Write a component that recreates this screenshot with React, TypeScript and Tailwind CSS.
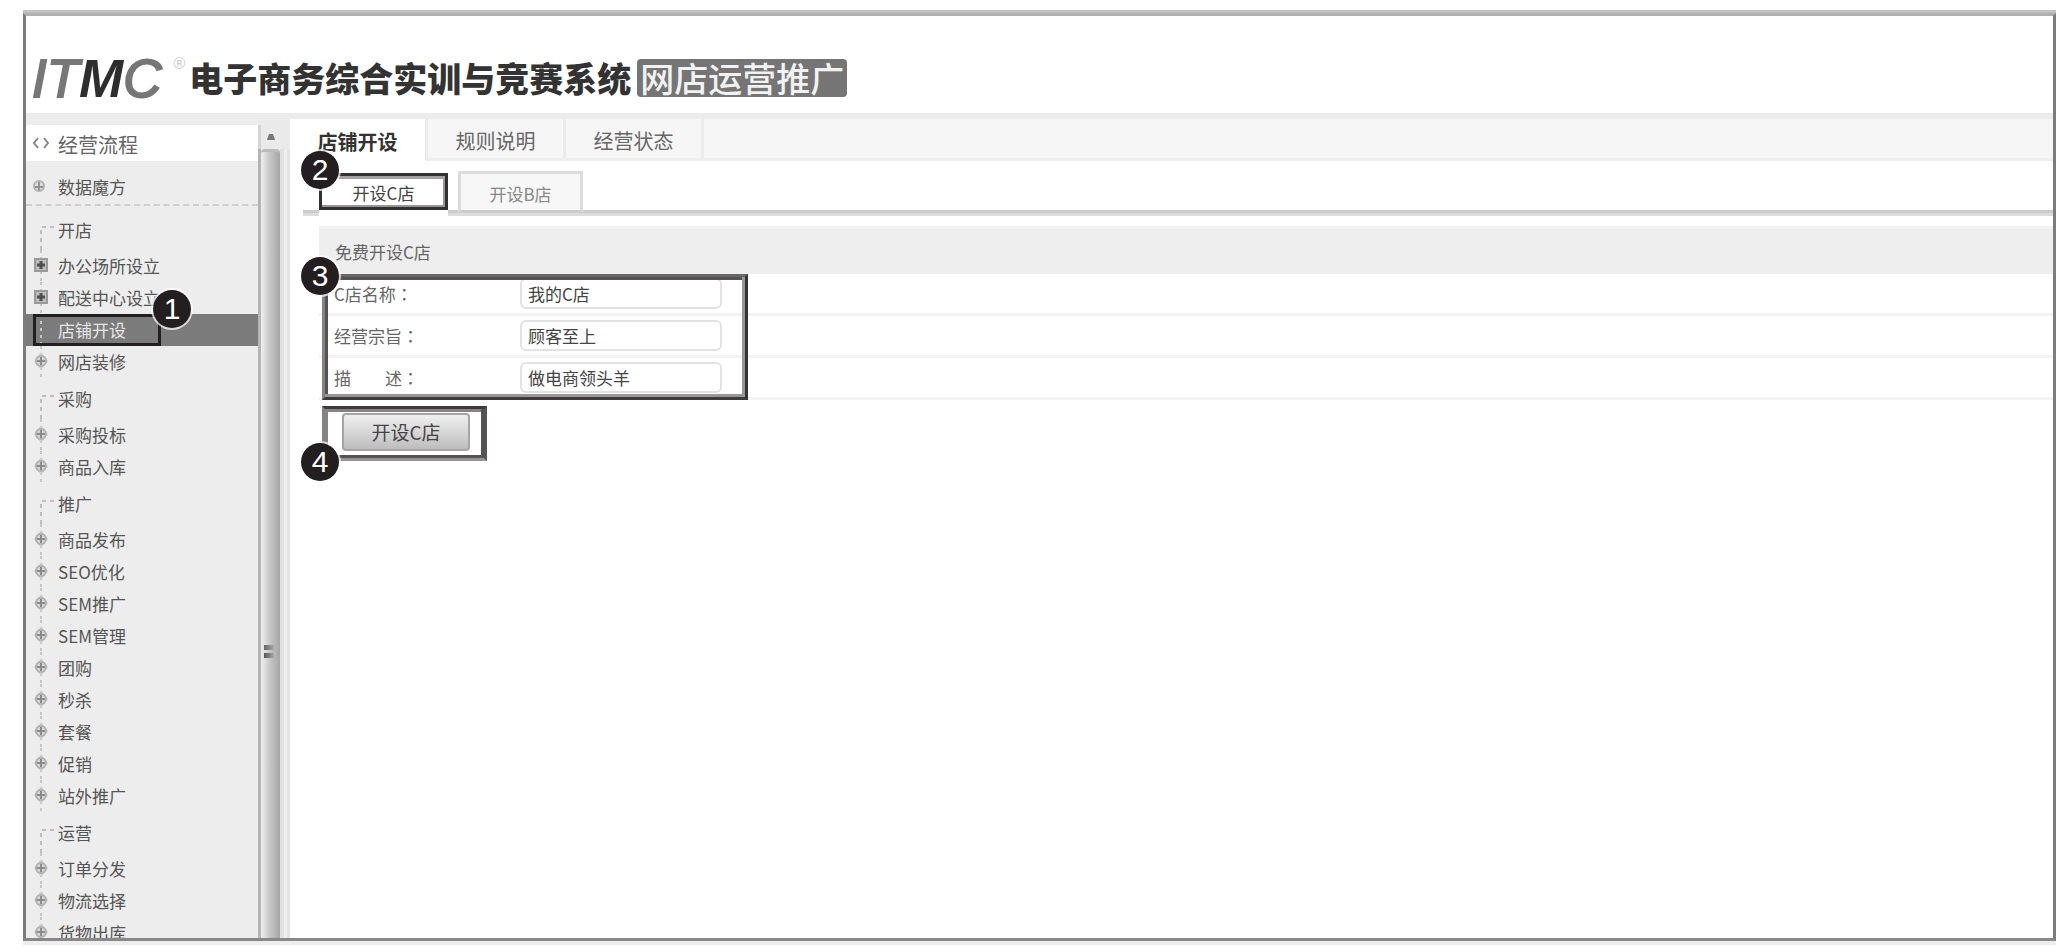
import { useState } from 'react';
import clsx from 'clsx';

type NodeKind = 'dot' | 'box' | 'none';

interface MenuItem {
  label: string;
  kind?: NodeKind;
}

const MENU: { title: string; items: MenuItem[] }[] = [
  {
    title: '开店',
    items: [
      { label: '办公场所设立', kind: 'box' },
      { label: '配送中心设立', kind: 'box' },
      { label: '店铺开设', kind: 'none' },
      { label: '网店装修' },
    ],
  },
  { title: '采购', items: [{ label: '采购投标' }, { label: '商品入库' }] },
  {
    title: '推广',
    items: [
      { label: '商品发布' },
      { label: 'SEO优化' },
      { label: 'SEM推广' },
      { label: 'SEM管理' },
      { label: '团购' },
      { label: '秒杀' },
      { label: '套餐' },
      { label: '促销' },
      { label: '站外推广' },
    ],
  },
  {
    title: '运营',
    items: [{ label: '订单分发' }, { label: '物流选择' }, { label: '货物出库' }],
  },
];

const TABS = ['店铺开设', '规则说明', '经营状态'];

const FIELDS = [
  { id: 'name', label: 'C店名称', value: '我的C店' },
  { id: 'tenet', label: '经营宗旨', value: '顾客至上' },
  { id: 'desc', label: '描　　述', value: '做电商领头羊' },
];

function StepBadge({ step, className }: { step: number; className: string }) {
  return (
    <span
      className={clsx(
        'absolute z-20 flex size-[38px] items-center justify-center rounded-full bg-[#231f20] font-["Liberation_Sans",sans-serif] text-[30px] leading-none text-white ring-2 ring-white/70',
        className,
      )}
    >
      {step}
    </span>
  );
}

function TreeNode({ kind = 'dot' }: { kind?: NodeKind }) {
  return (
    <svg className="h-8 w-8 shrink-0" viewBox="0 0 32 32" fill="none" aria-hidden="true">
      <path d="M15 0V32" stroke="#c6c6c6" strokeWidth="2" strokeDasharray="3 4" />
      {kind === 'dot' && (
        <>
          <path d="M15 6L22 15L15 24L8 15Z" fill="#cfcfcf" />
          <circle cx="15" cy="15" r="5" fill="#d6d6d6" stroke="#b2b2b2" strokeWidth="2" />
          <path d="M11 15H19M15 11V19" stroke="#8c8c8c" strokeWidth="2" />
        </>
      )}
      {kind === 'box' && (
        <>
          <rect x="9" y="9" width="12" height="12" fill="#bdbdbd" stroke="#9a9a9a" strokeWidth="2" />
          <path d="M11 15H19M15 11V19" stroke="#505050" strokeWidth="3" />
        </>
      )}
    </svg>
  );
}

function Sidebar() {
  const [active, setActive] = useState('店铺开设');

  return (
    <nav className="w-[232px] shrink-0 overflow-hidden bg-[#ededed] pt-[6px] text-[17px] text-[#555]">
      <a href="#flow" className="flex h-9 items-center bg-white pt-1 text-[20px] text-[#666]">
        <svg className="h-8 w-8 shrink-0" viewBox="0 0 32 32" fill="none" stroke="#888" strokeWidth="2" aria-hidden="true">
          <path d="M12 9L8 14L12 19M18 9L22 14L18 19" />
        </svg>
        经营流程
      </a>
      <a href="#cube" className="flex h-[45px] items-center border-b-2 border-dashed border-[#cfcfcf] pt-2">
        <svg className="h-8 w-8 shrink-0" viewBox="0 0 32 32" fill="none" aria-hidden="true">
          <circle cx="13" cy="15" r="5" fill="#ddd" stroke="#b2b2b2" strokeWidth="2" />
          <path d="M9 16H17M13 11V19" stroke="#929292" strokeWidth="2" />
        </svg>
        数据魔方
      </a>

      <div className="pt-[3px]">
        {MENU.map((group) => (
          <section key={group.title}>
            <h2 className="flex h-[41px] items-center">
              <svg className="h-[41px] w-8 shrink-0" viewBox="0 0 32 41" fill="none" aria-hidden="true">
                <path d="M28 18H15V41" stroke="#bdbdbd" strokeWidth="2" strokeDasharray="4 4" />
              </svg>
              {group.title}
            </h2>
            <ul>
              {group.items.map((item) => {
                const selected = item.label === active;
                return (
                  <li
                    key={item.label}
                    className={clsx('relative h-8', selected && 'bg-[#7b7b7b] text-[#e6e6e6]')}
                  >
                    <a
                      href={`#${item.label}`}
                      onClick={() => setActive(item.label)}
                      className="flex h-8 items-center leading-5"
                    >
                      <TreeNode kind={item.kind} />
                      {item.label}
                    </a>
                    {item.label === '店铺开设' && (
                      <>
                        <span className="pointer-events-none absolute inset-y-0 left-[7px] w-32 border-3 border-[#231f20]" />
                        <StepBadge step={1} className="-top-6 left-[127px]" />
                      </>
                    )}
                  </li>
                );
              })}
            </ul>
          </section>
        ))}
      </div>
    </nav>
  );
}

// Scrollbar and the drag handle between menu and content
function Splitter() {
  return (
    <div className="flex w-8 shrink-0 flex-col bg-[#eaeaea]">
      <div className="mt-[6px] flex h-6 shrink-0 items-center border-l-3 border-[#d4d4d4] pl-1">
        <svg className="size-3" viewBox="0 0 12 12" aria-hidden="true">
          <path d="M4 3H8L10 9H2Z" fill="#777" />
        </svg>
      </div>
      <div className="flex grow">
        <div className="w-[3px] bg-[#b5b5b5]" />
        <div className="relative w-[19px] rounded-t-sm border-t-3 border-[#bbb] bg-linear-to-r from-[#f0f0f0] via-[#c4c4c4] to-[#a6a6a6]">
          <div className="absolute top-[493px] left-[3px] flex flex-col gap-[3px]">
            <span className="h-[5px] w-[10px] bg-linear-to-r from-[#666] to-[#aaa]" />
            <span className="h-[5px] w-[10px] bg-linear-to-r from-[#555] to-[#aaa]" />
          </div>
        </div>
        <div className="w-1 bg-[#e0e0e0]" />
        <div className="w-[3px] bg-[#efefef]" />
        <div className="w-[3px] bg-[#e3e3e3]" />
      </div>
    </div>
  );
}

function TopTabs() {
  const [tab, setTab] = useState(TABS[0]);

  return (
    <div className="flex h-[42px] border-b-3 border-[#eee] bg-[#f6f6f6]">
      {TABS.map((name) => (
        <button
          key={name}
          type="button"
          onClick={() => setTab(name)}
          className={clsx(
            'w-[138px] border-r-3 border-[#ececec] pt-1 text-[20px]',
            name === tab ? '-mb-[3px] bg-white font-bold text-[#333]' : 'text-[#666]',
          )}
        >
          {name}
        </button>
      ))}
    </div>
  );
}

function ShopForm() {
  return (
    <form className="ml-[29px] text-[17px] text-[#666]" onSubmit={(e) => e.preventDefault()}>
      <h2 className="mt-[13px] flex h-12 items-center border-t-3 border-[#f2f2f2] bg-[#eee] pl-4">
        免费开设C店
      </h2>

      <div className="relative">
        {FIELDS.map((field) => (
          <div key={field.id} className="flex h-[42px] items-center border-b-3 border-[#f3f3f3] pl-[15px]">
            <label htmlFor={field.id} className="w-[186px] shrink-0">
              {field.label}
              <span lang="zh-TW" className='font-["Noto_Sans_CJK_TC",sans-serif]'>：</span>
            </label>
            <input
              id={field.id}
              defaultValue={field.value}
              className="h-[31px] w-[202px] rounded-md border-2 border-[#e2e2e2] bg-white px-[6px] text-[#444] outline-none"
            />
          </div>
        ))}
        <span className="pointer-events-none absolute inset-y-0 left-[3px] w-[426px] border-3 border-t-[#666] border-r-[#333] border-b-[#3d3a3b] border-l-[#858384] shadow-[inset_-3px_-3px_0_#979596,inset_3px_3px_0_#555253]" />
        <StepBadge step={3} className="-top-[17px] -left-[18px]" />
      </div>

      <div className="relative mt-[6px] ml-[3px] h-[55px] w-[165px] border-3 border-t-[#3d3a3b] border-r-[#555253] border-b-[#979596] border-l-[#858384] pt-1 pl-[17px] shadow-[inset_-3px_-3px_0_#555253,inset_3px_3px_0_#858384]">
        <button
          type="submit"
          className="h-[38px] w-32 rounded-sm border-2 border-[#a5a5a5] bg-linear-to-b from-[#f0f0f0] to-[#bdbdbd] text-[19px] text-[#444]"
        >
          开设C店
        </button>
        <StepBadge step={4} className="top-[34px] -left-6" />
      </div>
    </form>
  );
}

export default function App() {
  return (
    <div className='flex h-screen flex-col bg-white pt-[10px] pr-px pb-[6px] pl-[23px] font-["Noto_Sans_CJK_SC",sans-serif]'>
      <div className="h-[3px] shrink-0 bg-[#c2c2c2]" />
      <div className="flex min-h-0 grow flex-col overflow-hidden border-3 border-t-[#b0b0b0] border-r-[#7c7c7c] border-b-[#888] border-l-[#7c7c7c]">
        <header className="flex h-[97px] shrink-0 items-center pt-[27px] pl-[6px]">
          <div className='flex font-["Liberation_Sans",sans-serif] text-[53px] leading-none text-[#777] italic'>
            <span className="[-webkit-text-stroke:2px_#777]">IT</span>
            <span className="font-bold text-[#2e2e2e]">M</span>
            <span className="[-webkit-text-stroke:2px_#777]">C</span>
            <span className="ml-3 pt-1 text-[16px] leading-none text-[#ccc] not-italic">®</span>
          </div>
          <h1 className="ml-1 text-[34px] leading-none font-black whitespace-nowrap text-[#333]">
            电子商务综合实训与竞赛系统
          </h1>
          <span className="ml-[6px] rounded-sm bg-[#757575] px-[3px] text-[34px] leading-[38px] font-medium whitespace-nowrap text-[#f2f2f2]">
            网店运营推广
          </span>
        </header>

        <div className="flex min-h-0 grow border-t-6 border-[#ebebeb]">
          <Sidebar />
          <Splitter />
          <main className="min-w-0 grow">
            <TopTabs />

            <div className="mt-[10px] ml-[13px] flex h-[42px] text-[17px]">
              <div className="w-4 border-b-3 border-[#ccc] shadow-[0_3px_0_#dcdcdc]" />
              <div className="relative w-[129px]">
                <button type="button" className="h-[39px] w-full pt-1 text-[#444]">
                  开设C店
                </button>
                <span className="pointer-events-none absolute inset-x-0 top-[2px] h-[37px] border-3 border-[#333031] shadow-[inset_0_3px_0_#a3a1a2,inset_-2px_-2px_0_#979596]" />
                <StepBadge step={2} className="-top-5 -left-[18px]" />
              </div>
              <div className="w-[10px] border-b-3 border-[#ccc] shadow-[0_3px_0_#dcdcdc]" />
              <button
                type="button"
                className="w-[125px] border-3 border-[#dcdcdc] border-b-[#ccc] bg-[#f7f7f7] pt-1 text-[#888] shadow-[0_3px_0_#dcdcdc]"
              >
                开设B店
              </button>
              <div className="grow border-b-3 border-[#ccc] shadow-[0_3px_0_#dcdcdc]" />
            </div>

            <ShopForm />
          </main>
        </div>
      </div>
      <div className="h-1 shrink-0 bg-[#eee]" />
    </div>
  );
}
